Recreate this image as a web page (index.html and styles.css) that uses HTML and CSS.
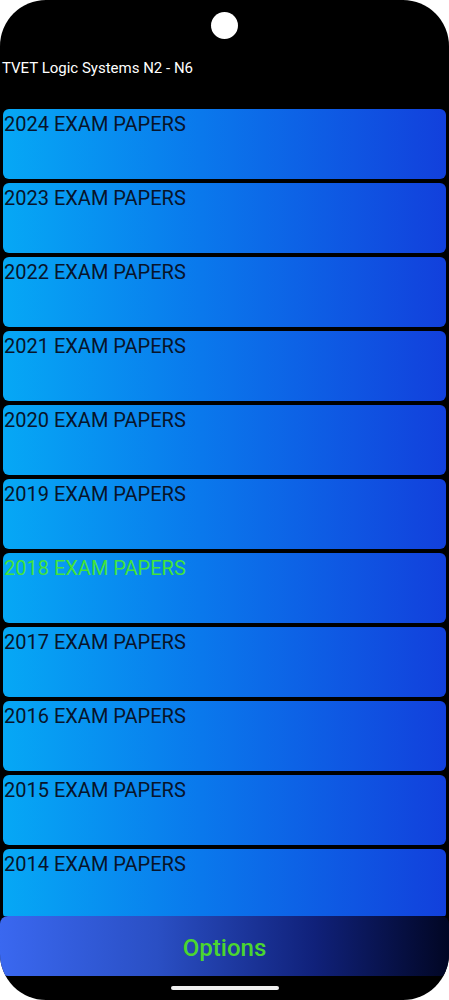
FILE: index.html
```html
<!DOCTYPE html>
<html>
<head>
<meta charset="utf-8">
<link rel="stylesheet" href="styles.css">
</head>
<body>
<div class="phone">
  <div class="status"><div class="camera"></div></div>
  <div class="title">TVET Logic Systems N2 - N6</div>
  <div class="list">
    <div class="card">2024 EXAM PAPERS</div>
    <div class="card">2023 EXAM PAPERS</div>
    <div class="card">2022 EXAM PAPERS</div>
    <div class="card">2021 EXAM PAPERS</div>
    <div class="card">2020 EXAM PAPERS</div>
    <div class="card">2019 EXAM PAPERS</div>
    <div class="card active">2018 EXAM PAPERS</div>
    <div class="card">2017 EXAM PAPERS</div>
    <div class="card">2016 EXAM PAPERS</div>
    <div class="card">2015 EXAM PAPERS</div>
    <div class="card">2014 EXAM PAPERS</div>
  </div>
  <div class="options">Options</div>
  <div class="nav"><div class="home"></div></div>
</div>
</body>
</html>
```
FILE: styles.css
```css
html, body {
  margin: 0;
  padding: 0;
  background: #ffffff;
}
.phone {
  width: 449px;
  height: 1000px;
  background: #000000;
  border-radius: 46px;
  overflow: hidden;
  display: flex;
  flex-direction: column;
  font-family: Roboto, "Liberation Sans", sans-serif;
}
.status {
  height: 50px;
  display: flex;
  justify-content: center;
  align-items: center;
  flex-shrink: 0;
}
.camera {
  width: 27px;
  height: 27px;
  border-radius: 50%;
  background: #ffffff;
}
.title {
  color: #ffffff;
  font-size: 15px;
  line-height: 20px;
  padding: 8px 0 0 2px;
  height: 51px;
  flex-shrink: 0;
}
.list {
  flex: 1;
  overflow: hidden;
  display: flex;
  flex-direction: column;
  gap: 4px;
  padding: 0 3px 0 3px;
}
.card {
  flex-shrink: 0;
  height: 70px;
  border-radius: 6px;
  background: linear-gradient(90deg, #06a8f5 0%, #0a78ec 45%, #1240dc 100%);
  color: #08142a;
  font-size: 20px;
  line-height: 31px;
  padding-left: 1px;
  box-sizing: border-box;
}
.card.active {
  color: #43e33a;
}
.options {
  flex-shrink: 0;
  height: 60px;
  border-radius: 8px;
  background: linear-gradient(90deg, #3a68f0 0%, #2a4fc4 35%, #10217a 70%, #010624 100%);
  color: #4bd62f;
  font-size: 24px;
  font-weight: 500;
  display: flex;
  justify-content: center;
  align-items: center;
  padding-top: 3px;
  box-sizing: border-box;
}
.nav {
  height: 24px;
  flex-shrink: 0;
  display: flex;
  justify-content: center;
  padding-top: 10px;
  box-sizing: border-box;
}
.home {
  width: 108px;
  height: 4px;
  border-radius: 2px;
  background: #f0f0f0;
}
```
